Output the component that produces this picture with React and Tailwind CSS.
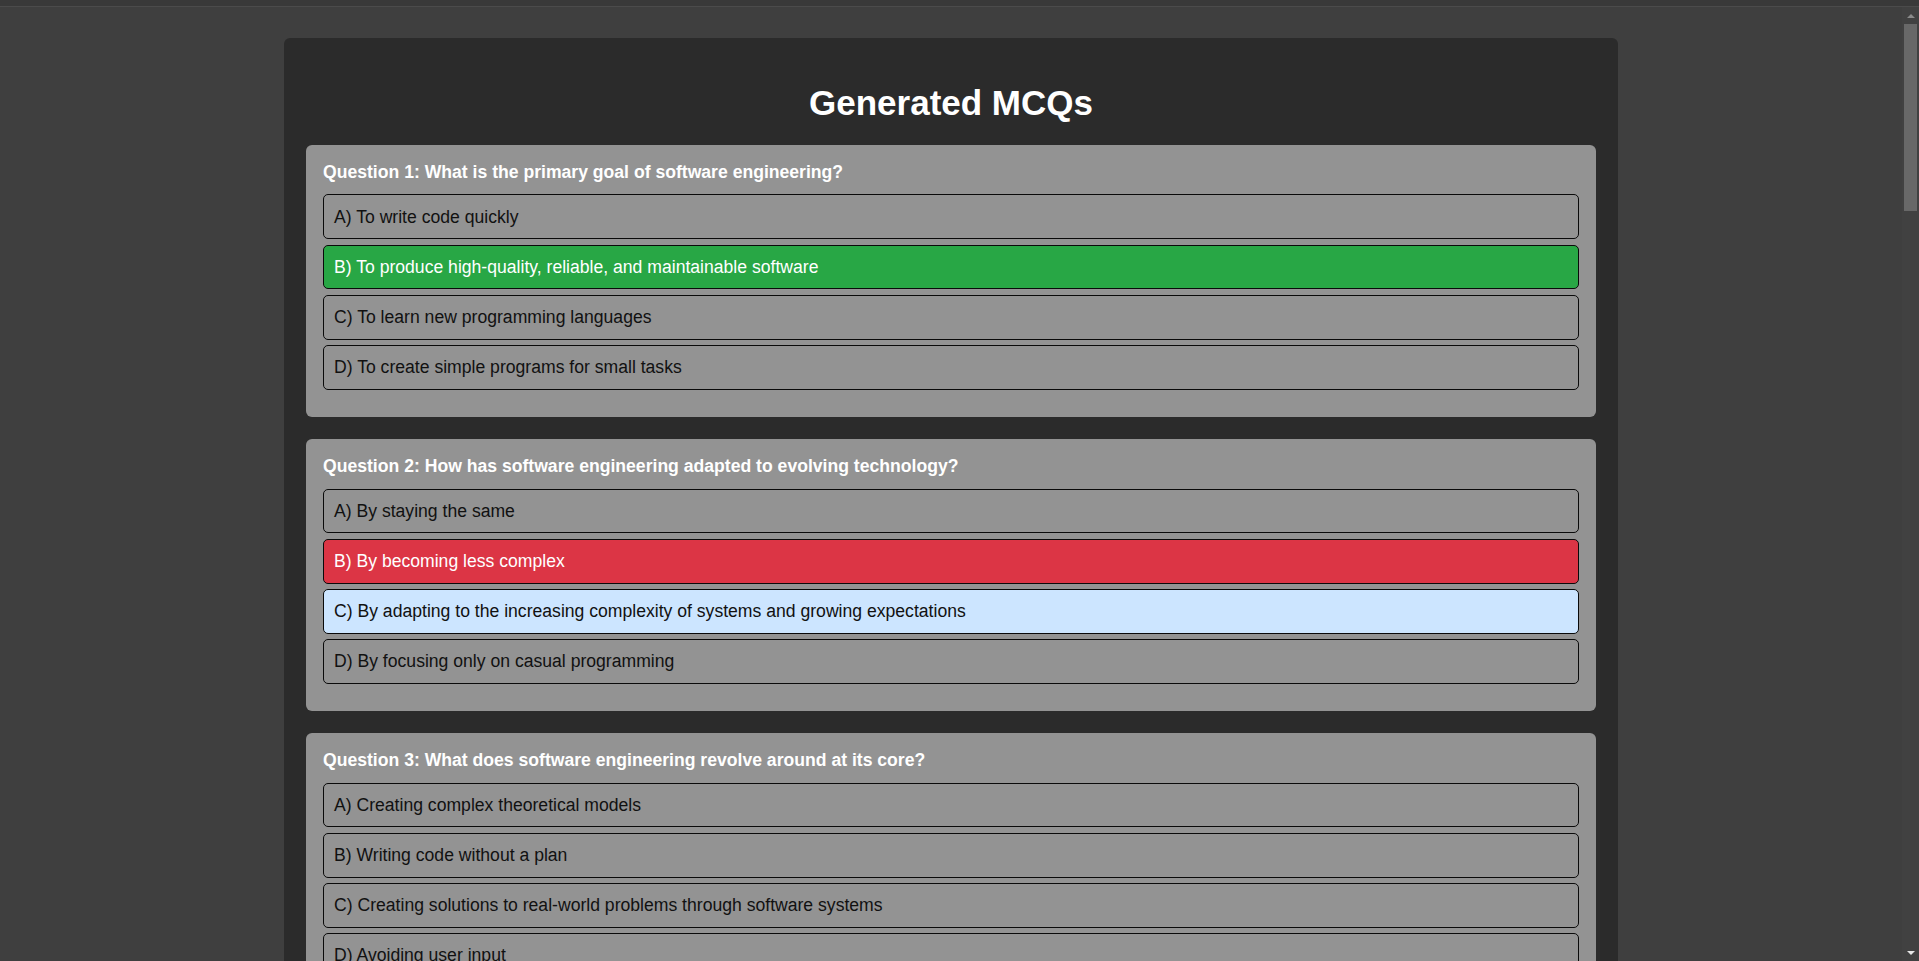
const questions = [
  {
    question: "What is the primary goal of software engineering?",
    options: [
      "A) To write code quickly",
      "B) To produce high-quality, reliable, and maintainable software",
      "C) To learn new programming languages",
      "D) To create simple programs for small tasks",
    ],
    states: [null, "correct", null, null],
  },
  {
    question: "How has software engineering adapted to evolving technology?",
    options: [
      "A) By staying the same",
      "B) By becoming less complex",
      "C) By adapting to the increasing complexity of systems and growing expectations",
      "D) By focusing only on casual programming",
    ],
    states: [null, "wrong", "answer", null],
  },
  {
    question: "What does software engineering revolve around at its core?",
    options: [
      "A) Creating complex theoretical models",
      "B) Writing code without a plan",
      "C) Creating solutions to real-world problems through software systems",
      "D) Avoiding user input",
    ],
    states: [null, null, null, null],
  },
];

function optionClass(state) {
  if (state === "correct") return "bg-[#28a745] text-white";
  if (state === "wrong") return "bg-[#dc3545] text-white";
  if (state === "answer") return "bg-[#cce5ff] text-[#111]";
  return "bg-transparent text-[#111]";
}

function App() {
  return (
    <div className="h-[961px] overflow-hidden bg-[#3f3f3f] flex flex-col font-['Liberation_Sans',Arial,sans-serif]">
      {/* franja superior */}
      <div className="h-[7px] shrink-0 bg-[#393939] border-b border-[#4b4b4b]" />

      <div className="flex flex-1 min-h-0">
        <main className="flex-1 overflow-hidden">
          <div className="mx-auto mt-[31px] w-[1334px] rounded-[6px] bg-[#2b2b2b] px-[22px] pt-[45px] pb-[22px]">
            <h1 className="text-center text-[35px] font-bold text-white leading-[1.15] mb-[22px]">
              Generated MCQs
            </h1>

            {questions.map((q, i) => (
              <div
                key={i}
                className="bg-[#939393] rounded-[6px] px-[17px] pt-[16.5px] pb-[22px] mb-[22px]"
              >
                <h3 className="text-[17.6px] font-bold text-white leading-[1.15] mb-[12.5px]">
                  Question {i + 1}: {q.question}
                </h3>
                {q.options.map((opt, j) => (
                  <div
                    key={j}
                    className={`border border-[#0a0a0a] rounded-[5px] px-[10px] py-[11.3px] mb-[5.4px] text-[17.6px] leading-[1.15] ${optionClass(
                      q.states[j]
                    )}`}
                  >
                    {opt}
                  </div>
                ))}
              </div>
            ))}
          </div>
        </main>

        {/* barra de desplazamiento */}
        <div className="w-[17px] shrink-0 bg-[#414141] flex flex-col items-center">
          <div className="h-[17px] flex items-center justify-center">
            <div className="w-0 h-0 border-l-[4px] border-r-[4px] border-b-[4px] border-l-transparent border-r-transparent border-b-[#8a8a8a]" />
          </div>
          <div className="w-[13px] h-[187px] bg-[#686868]" />
          <div className="flex-1" />
          <div className="h-[17px] flex items-center justify-center">
            <div className="w-0 h-0 border-l-[4px] border-r-[4px] border-t-[4px] border-l-transparent border-r-transparent border-t-[#e6e6e6]" />
          </div>
        </div>
      </div>
    </div>
  );
}

export default App;
